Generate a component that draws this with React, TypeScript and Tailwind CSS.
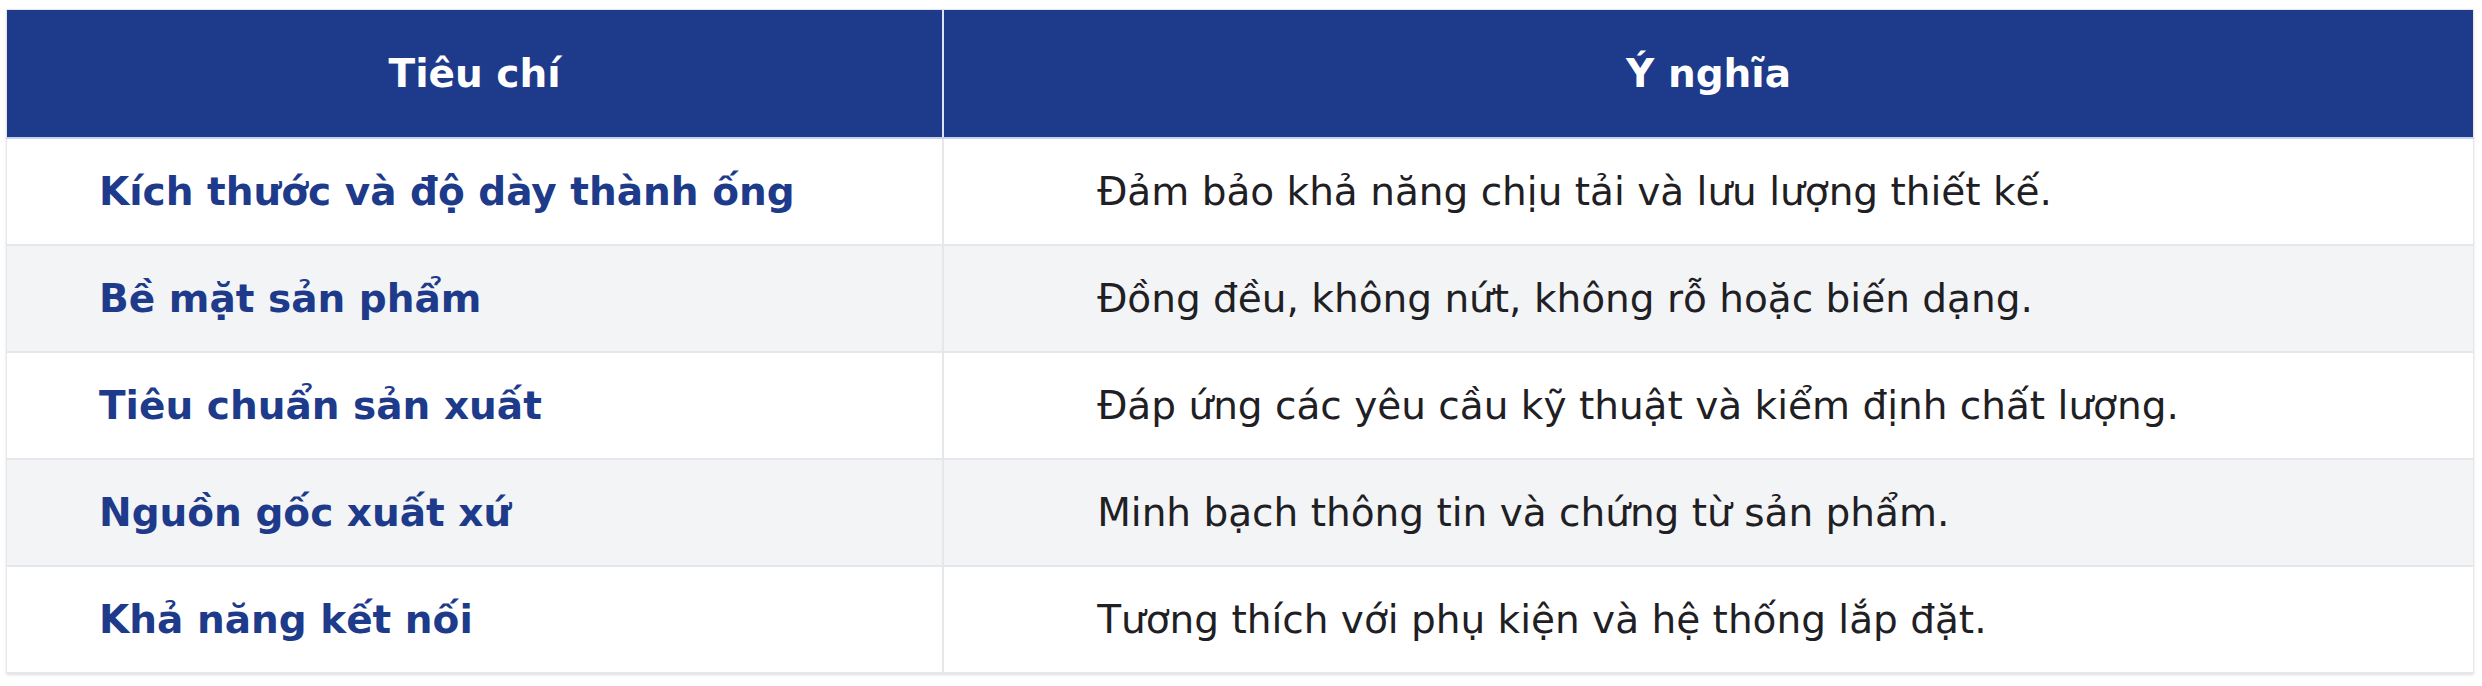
const rows = [
  {
    label: "Kích thước và độ dày thành ống",
    text: "Đảm bảo khả năng chịu tải và lưu lượng thiết kế.",
  },
  {
    label: "Bề mặt sản phẩm",
    text: "Đồng đều, không nứt, không rỗ hoặc biến dạng.",
  },
  {
    label: "Tiêu chuẩn sản xuất",
    text: "Đáp ứng các yêu cầu kỹ thuật và kiểm định chất lượng.",
  },
  {
    label: "Nguồn gốc xuất xứ",
    text: "Minh bạch thông tin và chứng từ sản phẩm.",
  },
  {
    label: "Khả năng kết nối",
    text: "Tương thích với phụ kiện và hệ thống lắp đặt.",
  },
];

export default function App() {
  return (
    <div
      className="bg-white pl-[6px] pt-[9px] min-h-[686px]"
      style={{ fontFamily: '"DejaVu Sans", sans-serif' }}
    >
      <table className="w-[2468px] border-collapse border border-[#e5e7eb] shadow-sm text-[39px] leading-none">
        <colgroup>
          <col className="w-[937px]" />
          <col className="w-[1531px]" />
        </colgroup>
        <thead>
          <tr className="h-[128px] bg-[#1e3a8a] text-white">
            <th className="font-bold text-center border-r-2 border-[#dbe3f5] border-b-2 border-b-[#c7d2ec]">
              Tiêu chí
            </th>
            <th className="font-bold text-center border-b-2 border-b-[#c7d2ec]">
              Ý nghĩa
            </th>
          </tr>
        </thead>
        <tbody>
          {rows.map((row, i) => (
            <tr
              key={row.label}
              className={`h-[107px] ${i % 2 === 1 ? "bg-[#f3f4f6]" : "bg-white"}`}
            >
              <td className="pl-[92px] font-bold text-[#1e3a8a] border-r-2 border-b-2 border-[#e5e7eb]">
                {row.label}
              </td>
              <td className="pl-[153px] text-[#1f2024] border-b-2 border-[#e5e7eb]">
                {row.text}
              </td>
            </tr>
          ))}
        </tbody>
      </table>
    </div>
  );
}
